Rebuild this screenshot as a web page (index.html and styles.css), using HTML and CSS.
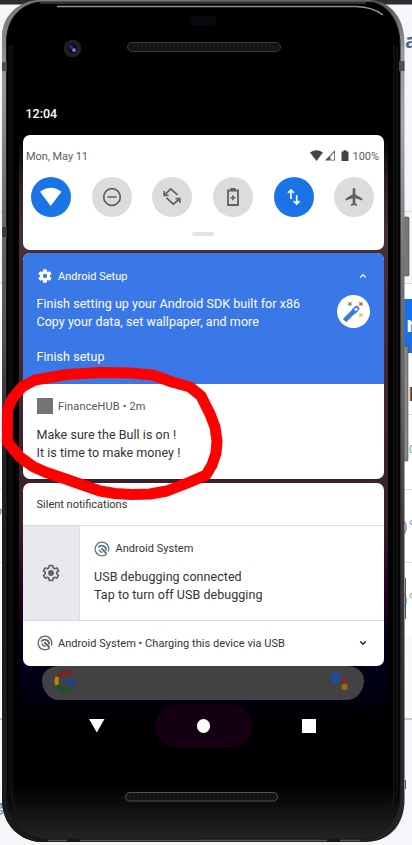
FILE: index.html
```html
<!DOCTYPE html>
<html lang="en">
<head>
<meta charset="utf-8">
<title>Notifications</title>
<link rel="stylesheet" href="styles.css">
</head>
<body>
<svg class="backdrop" viewBox="0 0 412 845" aria-hidden="true">
  <defs>
    <linearGradient id="rim" x1="0" y1="0" x2="0" y2="1">
      <stop offset="0" stop-color="#555"/><stop offset=".06" stop-color="#999"/><stop offset=".15" stop-color="#a5a5a5"/><stop offset=".3" stop-color="#777"/><stop offset=".48" stop-color="#606060"/><stop offset=".62" stop-color="#3c3c3c"/><stop offset="1" stop-color="#222"/>
    </linearGradient>
    <linearGradient id="rimLeft" x1="0" y1="0" x2="0" y2="1">
      <stop offset="0" stop-color="#777"/><stop offset=".1" stop-color="#999"/><stop offset=".25" stop-color="#686c6a"/><stop offset=".4" stop-color="#505050"/><stop offset=".55" stop-color="#202020"/><stop offset="1" stop-color="#191919"/>
    </linearGradient>
    <linearGradient id="chin" x1="0" y1="0" x2="0" y2="1">
      <stop offset="0" stop-color="#000"/><stop offset=".935" stop-color="#000"/><stop offset=".985" stop-color="#1c1c1c"/><stop offset="1" stop-color="#242424"/>
    </linearGradient>
    <linearGradient id="wall" x1="0" y1="0" x2="0" y2="1">
      <stop offset="0" stop-color="#000"/><stop offset=".08" stop-color="#30202a"/><stop offset=".16" stop-color="#46303a"/><stop offset=".5" stop-color="#41232f"/><stop offset=".66" stop-color="#391e2d"/><stop offset=".78" stop-color="#260024"/><stop offset=".86" stop-color="#03001c"/><stop offset=".94" stop-color="#000014"/><stop offset="1" stop-color="#000"/>
    </linearGradient>
    <pattern id="mesh" width="4" height="8" patternUnits="userSpaceOnUse"><rect width="4" height="8" fill="#12110f"/><path d="M1 0l2 4-2 4" fill="none" stroke="#24221e"/></pattern>
  </defs>
  <rect width="412" height="845" fill="#f5f6f9"/>
  <rect width="412" height="4.5" fill="#2d2d2d"/>
  <path d="M0 211.500H412M0 283.500H412" stroke="#d5dade"/>
  <rect y="284" width="412" height="434" fill="#fff"/>
  <rect y="635" width="412" height="83" fill="#fafafa"/>
  <rect x="404" y="299" width="8" height="54" fill="#1b6fe8"/>
  <path d="M0 414.500H412M0 489.500H412M0 562.500H412" stroke="#ddd"/>
  <path d="M0 719H412" stroke="#c8cacd" stroke-width="2"/>
  <g class="page-text">
    <text x="405" y="48" fill="#476a9d" font-size="19" font-weight="700">a</text>
    <text x="406" y="332" fill="#fff" font-size="22" font-weight="700">r</text>
    <text x="403" y="531" fill="#7b6d76" font-size="14">)</text><text x="409" y="531" fill="#5586c9" font-size="14">°</text>
    <text x="403" y="604" fill="#5586c9" font-size="14">)</text><text x="409" y="604" fill="#b58559" font-size="14">°</text>
    <text x="409" y="453" fill="#5586c9" font-size="10">0</text>
    <text x="-5" y="811" fill="#5a879a" font-size="15">g</text>
    <text x="-5" y="515" fill="#8d6f55" font-size="12">o</text>
  </g>
  <path d="M410 387h2v14h-2z" fill="#4c4240"/><path d="M410 387v14" stroke="#dc9b42"/>
  <rect x="403" y="217" width="6" height="59" rx="1" fill="#777" stroke="#333" stroke-width=".5"/>
  <rect x="402" y="346" width="6" height="115" rx="1" fill="#888" stroke="#333" stroke-width=".5"/>
  <path d="M405.500 578v41M405.500 780v9" stroke="#555"/>
  <path d="M37 0H371C391 2 404.500 18 404.500 43V800C404.500 822 392 841 367 842H41C19 841 2 824 2 800V38C2 16 17 3 37 0Z" fill="url(#rim)"/>
  <path d="M37 0H200V842H41C19 841 2 824 2 800V38C2 16 17 3 37 0Z" fill="url(#rimLeft)"/>
  <path d="M42 1.500H366C386 2 400 19 400 45V796C400 819 384 838 361 839H46C23 838 6.500 820 6.500 796V42C6.500 20 19 4 42 1.500Z" fill="url(#chin)" stroke="#151515"/>
  <path d="M12 45V793C12 814 29 831 47 835M394 45V793C394 814 378 831 359 835" fill="none" stroke="#1d1d1d"/>
  <path d="M9.500 45V795M397 45V795" stroke="#111" stroke-width="2"/>
  <path d="M40 2.500H366" stroke="#303030" stroke-width="3"/>
  <path d="M37 1H371" stroke="#77797b"/>
  <path d="M57 6.500H356Q373 7 383 15" fill="none" stroke="#8f9297" stroke-width="1.500"/>
  <path d="M2 62h5v9H2zM399 61h5.500v10H399z" fill="#4e5050"/>
  <path d="M2 227h5v10H2z" fill="#383a39"/>
  <path d="M67 840.500h13M327 840.500h13" stroke="#171717" stroke-width="3"/>
  <path d="M48 840.500H67M80 840.500H327M340 840.500H360" stroke="#545454" stroke-width="1.500"/>
  <rect x="190" y="16" width="27" height="9.500" rx="4.700" fill="#08090c"/>
  <circle cx="72.500" cy="48.500" r="8.700" fill="#24211f"/><circle cx="72.500" cy="48.500" r="5" fill="#0b0d20"/><circle cx="71" cy="47" r="2" fill="#26347c"/><circle cx="74" cy="50" r="2" fill="#5368cf"/><circle cx="74" cy="50.500" r=".8" fill="#b5bffa"/>
  <rect x="127.500" y="42.500" width="153" height="9" rx="4.500" fill="url(#mesh)" stroke="#3c3a36"/>
  <rect x="125.500" y="792.500" width="152" height="8.500" rx="4.250" fill="url(#mesh)" stroke="#55534e"/>
  <rect x="19" y="135" width="369" height="590" fill="url(#wall)"/>
</svg>

<main class="screen">
  <div class="clock">12:04</div>

  <section class="panel quick">
    <div class="status">
      <span class="date">Mon, May 11</span>
      <svg class="status-icons" viewBox="0 0 42 14"><path d="M0 3.500Q6.500-1 13 3.500L6.500 12Z" fill="#444"/><path d="M25 1.200V11.500H14.800Z" fill="#555"/><path d="M20.500 7.200 24.200 3.500V10.700H20.500Z" fill="#fff"/><path d="M33.500 1.200h3v1.300H38.500V12h-7V2.500h2z" fill="#444"/></svg>
      <span class="percent">100%</span>
    </div>
    <div class="toggles">
      <div class="toggle on"><svg viewBox="0 0 40 40"><path d="M9 14.800Q19.700 6.800 30.500 14.800L19.700 29Z" fill="#fff"/></svg></div>
      <div class="toggle"><svg viewBox="0 0 40 40"><g fill="none" stroke="#606060" stroke-width="1.700"><circle cx="20" cy="20" r="8.300"/><path d="M15.500 20h9"/></g></svg></div>
      <div class="toggle"><svg viewBox="0 0 40 40"><g fill="none" stroke="#606060" stroke-width="1.700"><path d="M25.500 17.800 18.700 11.800 12.500 18M14.500 20.800 21.300 27.200 27.500 22"/><path d="M12.200 14v4.300h4.300M23.500 21.700h4.300V26"/></g></svg></div>
      <div class="toggle"><svg viewBox="0 0 40 40"><path d="M15 13.500h10V28H15z" fill="none" stroke="#606060" stroke-width="1.800"/><path d="M17.500 11h5v3h-5z" fill="#606060"/><path d="M20 18.200v5M17.500 20.700h5" stroke="#606060" stroke-width="1.600"/></svg></div>
      <div class="toggle on"><svg viewBox="0 0 40 40"><path d="M17 22V13.500M14 16l3-3 3 3M22.700 18v8.500M19.700 24l3 3 3-3" fill="none" stroke="#fff" stroke-width="1.700"/></svg></div>
      <div class="toggle"><svg viewBox="0 0 40 40"><path transform="translate(9.300 9.300) scale(.89)" d="M21.500 16v-2l-8-5V3.500C13.500 2.670 12.830 2 12 2S10.500 2.670 10.500 3.500V9l-8 5v2l8-2.500V19l-2 1.500V22l3.500-1 3.500 1v-1.500l-2-1.500v-5.500l8 2.500z" fill="#606060"/></svg></div>
    </div>
    <div class="handle"></div>
  </section>

  <section class="panel alerts">
    <article class="setup">
      <header class="source">
        <svg class="source-icon" viewBox="0 0 24 24"><path fill="#fff" d="M19.400 13a7 7 0 0 0 0-2l2.100-1.700a.5.500 0 0 0 .1-.6l-2-3.500a.5.500 0 0 0-.6-.2l-2.500 1a7 7 0 0 0-1.700-1l-.4-2.600a.5.500 0 0 0-.5-.4h-4a.5.500 0 0 0-.5.400L9 5a7 7 0 0 0-1.700 1l-2.500-1a.5.500 0 0 0-.6.200l-2 3.500a.5.500 0 0 0 .1.600L4.500 11a7 7 0 0 0 0 2l-2.200 1.700a.5.500 0 0 0-.1.600l2 3.500c.1.200.4.300.6.200l2.500-1a7 7 0 0 0 1.700 1l.4 2.600c0 .2.200.4.500.4h4c.300 0 .5-.2.500-.4l.4-2.600a7 7 0 0 0 1.700-1l2.500 1c.200.100.5 0 .6-.2l2-3.500a.5.500 0 0 0-.1-.6zM12 15.200a3.200 3.200 0 1 1 0-6.400 3.200 3.200 0 0 1 0 6.400z"/></svg>
        <span class="name">Android Setup</span>
        <svg class="chevron" viewBox="0 0 8 6"><path d="M1.200 4.500 4 1.700l2.800 2.800" fill="none" stroke="#fff" stroke-width="1.200"/></svg>
      </header>
      <div class="setup-body">
        <div class="message"><p>Finish setting up your Android SDK built for x86</p><p>Copy your data, set wallpaper, and more</p></div>
        <svg class="wand" viewBox="0 0 33 33"><circle cx="16.500" cy="16.500" r="16.500" fill="#fff"/><path d="m9.200 24 10.400-10.400" stroke="#3c78e8" stroke-width="4.600" stroke-linecap="square"/><path d="m17.700 15.500 1.200-1.200" stroke="#3c78e8" stroke-width="5.500" stroke-linecap="round"/><circle cx="19" cy="14.200" r="1.500" fill="#fff"/><g stroke-width="1.200"><path d="m11.300 7.300 3.200 3.200m0-3.200-3.200 3.200" stroke="#30a451"/><path d="m22.300 7.300 3.200 3.200m0-3.200-3.200 3.200" stroke="#e24336"/><path d="m22.300 18.500 3.200 3.200m0-3.200-3.200 3.200" stroke="#f6b51b"/></g></svg>
      </div>
      <div class="action">Finish setup</div>
    </article>
    <article class="finance">
      <header class="source"><span class="app-square"></span><span class="name">FinanceHUB • 2m</span></header>
      <div class="message"><p>Make sure the Bull is on !</p><p>It is time to make money !</p></div>
    </article>
  </section>

  <section class="panel silent">
    <h2 class="silent-title">Silent notifications</h2>
    <article class="debug">
      <div class="debug-settings"><svg viewBox="0 0 24 24"><path fill="none" stroke="#606266" stroke-width="2" stroke-linejoin="round" d="M10 3h4l.5 2.700 1.900 1.100L19 5.900l2 3.400-2.100 1.800v2l2.100 1.700-2 3.400-2.600-1-1.900 1.100L14 21h-4l-.5-2.700-1.900-1.100-2.600 1-2-3.400 2.100-1.700v-2L3 9.300l2-3.400 2.600.9 1.900-1.100z"/><circle cx="12" cy="12" r="3.500" fill="#606266"/></svg></div>
      <div class="debug-content">
        <header class="source"><svg class="source-icon system blue" viewBox="0 0 16 16" fill="none" stroke="currentColor"><path d="M12.800 12.800A6.800 6.800 0 1 1 14.300 10.500" stroke-width="1.300"/><path d="M4.200 6.500A4.300 4.300 0 0 1 12 9.500" stroke-width="1.800"/><path d="M7.300 7.300 12.500 12.500" stroke-width="2"/><path d="M5.300 8.200A3 3 0 0 0 8.500 11.300" stroke-width="1.400"/></svg><span class="name">Android System</span></header>
        <div class="message"><p>USB debugging connected</p><p>Tap to turn off USB debugging</p></div>
      </div>
    </article>
    <article class="charging source">
      <svg class="source-icon system" viewBox="0 0 16 16" fill="none" stroke="currentColor"><path d="M12.800 12.800A6.800 6.800 0 1 1 14.300 10.500" stroke-width="1.300"/><path d="M4.200 6.500A4.300 4.300 0 0 1 12 9.500" stroke-width="1.800"/><path d="M7.300 7.300 12.500 12.500" stroke-width="2"/><path d="M5.300 8.200A3 3 0 0 0 8.500 11.300" stroke-width="1.400"/></svg>
      <span class="name">Android System • Charging this device via USB</span>
      <svg class="chevron" viewBox="0 0 8 6"><path d="M1.200 1.500 4 4.300l2.800-2.800" fill="none" stroke="#222" stroke-width="1.300"/></svg>
    </article>
  </section>

  <div class="search">
    <svg class="google" viewBox="0 0 22 22" fill="none" stroke-width="4"><path d="M17.400 5.100A8.500 8.500 0 0 0 3.500 7" stroke="#7c211c"/><path d="M3.500 7a8.500 8.500 0 0 0 0 8" stroke="#b78608"/><path d="M3.500 15a8.500 8.500 0 0 0 13.300 2.200" stroke="#1b5424"/><path d="M16.800 17.200A8 8 0 0 0 19.300 11.200H11" stroke="#1f4388"/></svg>
    <svg class="assistant" viewBox="0 0 20 20"><circle cx="5.500" cy="6.500" r="5.300" fill="#1f4c9c"/><circle cx="14.500" cy="9.300" r="2.700" fill="#8b2720"/><circle cx="14.500" cy="16" r="3.200" fill="#966e08"/><circle cx="18.500" cy="6.300" r="1.300" fill="#1d6a2d"/></svg>
  </div>
  <nav class="navigation">
    <svg viewBox="0 0 16 14"><path d="M0 0h15.500L7.800 13.500z" fill="#fff"/></svg>
    <div class="home"><span></span></div>
    <span class="recent"></span>
  </nav>
</main>

<svg class="marker" viewBox="0 0 412 845" aria-hidden="true"><path d="M7.300 442 7.500 410 12 399 22 387 35 380 67 374.500 100 372.500 130 373 153 375 172 382 190 387 201 396 210 414 215 427 217 441 216 453 212 465 206 475 190 482 167 491 150 494 132 494.500 115 493.500 100 491 67 479.500 45 472 33 466.500 20 457Z"/></svg>
</body>
</html>
```
FILE: styles.css
```css
* { box-sizing: border-box; }
body { margin: 0; width: 412px; height: 845px; overflow: hidden; position: relative; font-family: Roboto, sans-serif; color: #333; }
p, h2 { margin: 0; }
svg { display: block; flex: none; }
.backdrop, .marker { position: absolute; left: 0; top: 0; width: 412px; height: 845px; }
.page-text { font-family: "Open Sans", sans-serif; }
.marker path { fill: none; stroke: #f00; stroke-width: 11px; stroke-linejoin: round; }
.screen { position: relative; width: 369px; margin-left: 19px; padding: 105px 4px 0 3.5px; }
.clock { height: 29.500px; padding-left: 3px; line-height: 18px; font-size: 12.500px; font-weight: 500; color: #fff; }
.panel { width: 361.500px; border-radius: 7px; overflow: hidden; background: #fff; }
.quick { height: 115px; padding: 13px 5px 0 3.500px; }
.status { display: flex; align-items: center; height: 17px; font-size: 11px; color: #606060; }
.date { letter-spacing: -.06px; }
.status-icons { width: 42px; height: 14px; margin-left: auto; margin-right: 1px; }
.percent { width: 26.500px; }
.toggles { display: flex; justify-content: space-between; padding: 12.500px 4.800px 0 5.200px; }
.toggle { width: 40px; height: 40px; border-radius: 50%; background: #dcdcdc; }
.toggle.on { background: #1b73e8; }
.handle { width: 22px; height: 4px; margin: 14.500px auto 0; border-radius: 2px; background: #e3e3e3; }
.alerts { height: 226px; margin-top: 3.500px; }
.setup { height: 131px; background: #3b78e7; color: #fff; padding: 14px 14px 0; }
.source { display: flex; align-items: center; height: 18px; font-size: 11px; }
.source-icon { width: 16px; height: 16px; margin-right: 5.500px; }
.name { white-space: nowrap; letter-spacing: .03px; }
.chevron { width: 8px; height: 6px; margin-left: auto; margin-right: 3px; }
.message { font-size: 12.500px; line-height: 17.800px; letter-spacing: .05px; white-space: nowrap; }
.setup-body { display: flex; justify-content: space-between; padding-top: 10px; }
.wand { width: 33px; height: 33px; margin-top: -.5px; }
.action { margin-top: 17.900px; line-height: 18px; font-size: 12.500px; letter-spacing: .05px; }
.finance { height: 95px; padding: 13px 14px 0; }
.app-square { width: 16px; height: 16px; margin-right: 5.500px; background: #747474; }
.finance .message { padding-top: 11px; }
.finance .name { color: #555; letter-spacing: .15px; }
.silent { height: 183px; margin-top: 3.500px; }
.silent-title { height: 43.500px; padding-left: 14px; line-height: 43px; font-size: 11px; font-weight: 400; border-bottom: 1px solid #ddd; }
.debug { display: flex; height: 95px; border-bottom: 1px solid #ddd; }
.debug-settings { display: grid; place-items: center; width: 57.500px; border-right: 1px solid #dadce0; background: #e8e9ed; }
.debug-settings svg { width: 20px; height: 20px; }
.debug-content { padding: 13.500px 0 0 14px; }
.debug-content .message { padding-top: 10.400px; }
.system { color: #666; }
.blue { color: #607d8b; }
.charging { height: 44.500px; padding: 0 14px; }
.search { display: flex; align-items: center; justify-content: space-between; width: 322px; height: 34.500px; margin-left: 19.500px; padding: 0 14px 4px 12px; border-radius: 17px / 14px 14px 20px 20px; background: #424143; }
.google { width: 22px; height: 22px; }
.assistant { width: 20px; height: 20px; }
.navigation { display: flex; align-items: center; height: 44px; margin-top: 4px; padding-left: 66.500px; }
.navigation > svg { width: 16px; height: 14px; }
.home { display: grid; place-items: center; width: 97px; height: 44px; margin-left: 50px; border-radius: 22px; background: #140012; }
.home span { width: 13.500px; height: 13.500px; border-radius: 50%; background: #fff; }
.recent { width: 14px; height: 14px; margin-left: 49.500px; background: #fff; }
```
